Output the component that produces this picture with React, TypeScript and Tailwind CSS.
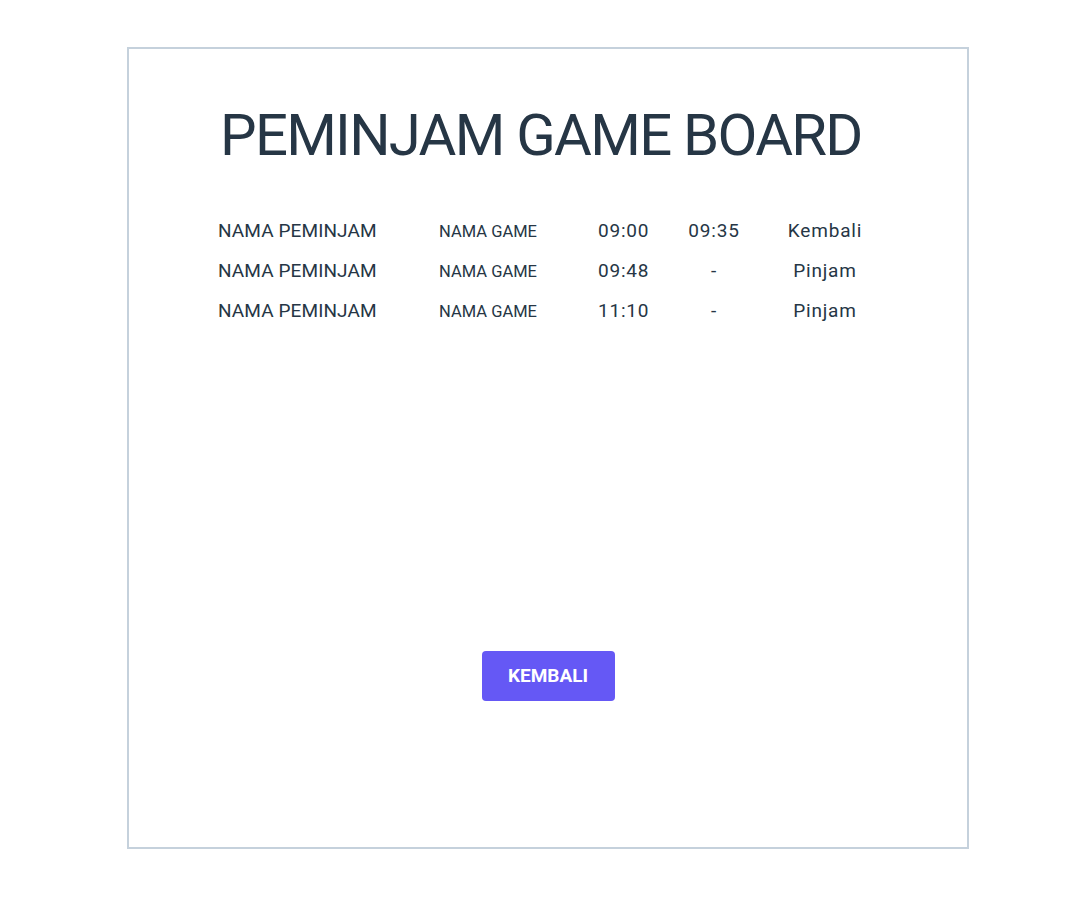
import React from "react";

const rows = [
  { nama: "NAMA PEMINJAM", game: "NAMA GAME", mulai: "09:00", selesai: "09:35", status: "Kembali" },
  { nama: "NAMA PEMINJAM", game: "NAMA GAME", mulai: "09:48", selesai: "-", status: "Pinjam" },
  { nama: "NAMA PEMINJAM", game: "NAMA GAME", mulai: "11:10", selesai: "-", status: "Pinjam" },
];

export default function App() {
  return (
    <div className="w-[1080px] h-[924px] bg-white pt-[47px] pl-[127px]" style={{ fontFamily: "Roboto, 'Liberation Sans', sans-serif" }}>
      <div className="w-[842px] h-[802px] border-2 border-[#c5d1dc] flex flex-col items-center text-[#263645]">
        <h1 className="self-start ml-[91px] mt-[50px] text-[58px] leading-[72px] font-normal tracking-[-1.7px] whitespace-nowrap">PEMINJAM GAME BOARD</h1>
        <div className="mt-[40px] self-start ml-[89px] flex flex-col">
          {rows.map((r, i) => (
            <div key={i} className="flex h-[40px] items-center">
              <div className="w-[160px] text-[19px] tracking-[0.1px]">{r.nama}</div>
              <div className="w-[220px] text-center text-[16.5px] pt-[2px]">{r.game}</div>
              <div className="w-[48px] text-center text-[19px] tracking-[0.8px] whitespace-nowrap">{r.mulai}</div>
              <div className="w-[136px] text-center text-[19px] tracking-[0.8px]">{r.selesai}</div>
              <div className="w-[86px] text-center text-[19px] tracking-[0.8px]">{r.status}</div>
            </div>
          ))}
        </div>
        <button className="mt-[320px] w-[133px] h-[50px] rounded-[4px] bg-[#6558f5] text-white text-[19px] font-bold">KEMBALI</button>
      </div>
    </div>
  );
}
